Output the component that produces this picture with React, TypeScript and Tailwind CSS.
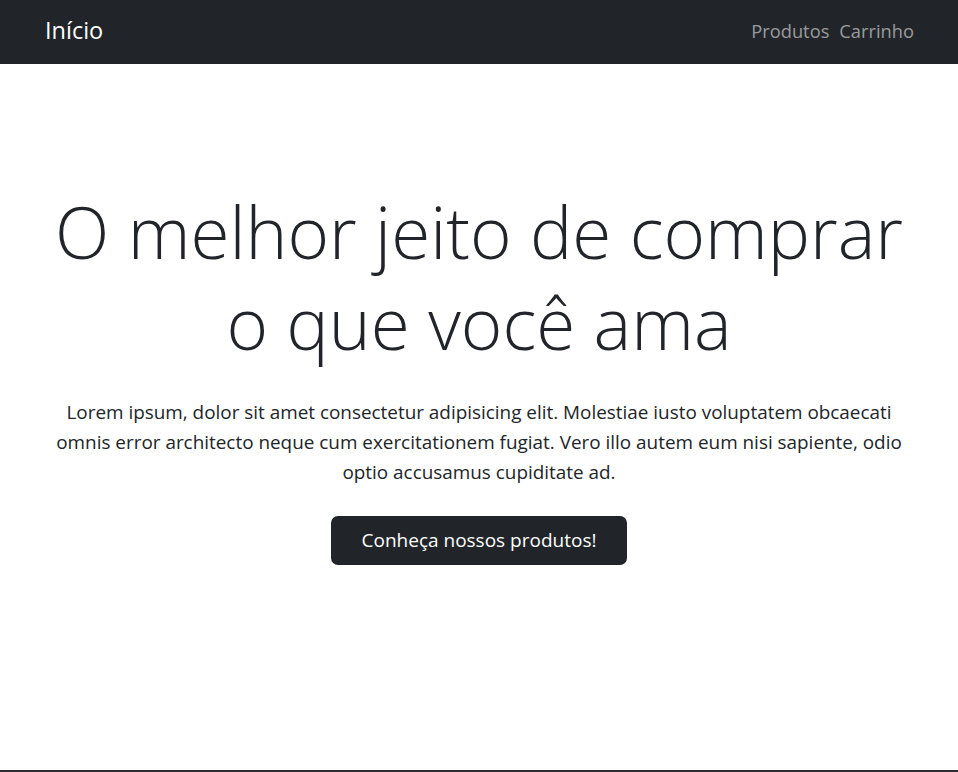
import React from "react";

const font = { fontFamily: '"Open Sans", "Noto Sans", sans-serif' };

const Navbar = () => {
  return (
    <nav className="flex h-16 items-center justify-between bg-[#212529] px-[44px] pb-[2px]">
      <a href="#" className="pl-px text-[23.5px] text-white">
        Início
      </a>
      <div className="flex gap-[10px] text-[18.3px] text-[#ffffff8c]">
        <a href="#">Produtos</a>
        <a href="#">Carrinho</a>
      </div>
    </nav>
  );
};

const Hero = () => {
  return (
    <main className="flex h-[706px] flex-col items-center px-12 pt-[122px] text-center text-[#212529]">
      <h1 className="text-[71px] font-light leading-[91px]">
        O melhor jeito de comprar
        <br />o que você ama
      </h1>
      <p className="mt-[29px] max-w-[862px] text-[18.9px] leading-[30px]">
        Lorem ipsum, dolor sit amet consectetur adipisicing elit. Molestiae iusto voluptatem obcaecati
        omnis error architecto neque cum exercitationem fugiat. Vero illo autem eum nisi sapiente, odio
        optio accusamus cupiditate ad.
      </p>
      <button className="mt-[29px] h-[49px] w-[296px] rounded-[7px] bg-[#212529] text-[19px] text-white">
        Conheça nossos produtos!
      </button>
    </main>
  );
};

export default function App() {
  return (
    <div className="min-h-screen bg-white" style={font}>
      <Navbar />
      <Hero />
      <footer className="h-[120px] bg-[#2b2c30]" />
    </div>
  );
}
